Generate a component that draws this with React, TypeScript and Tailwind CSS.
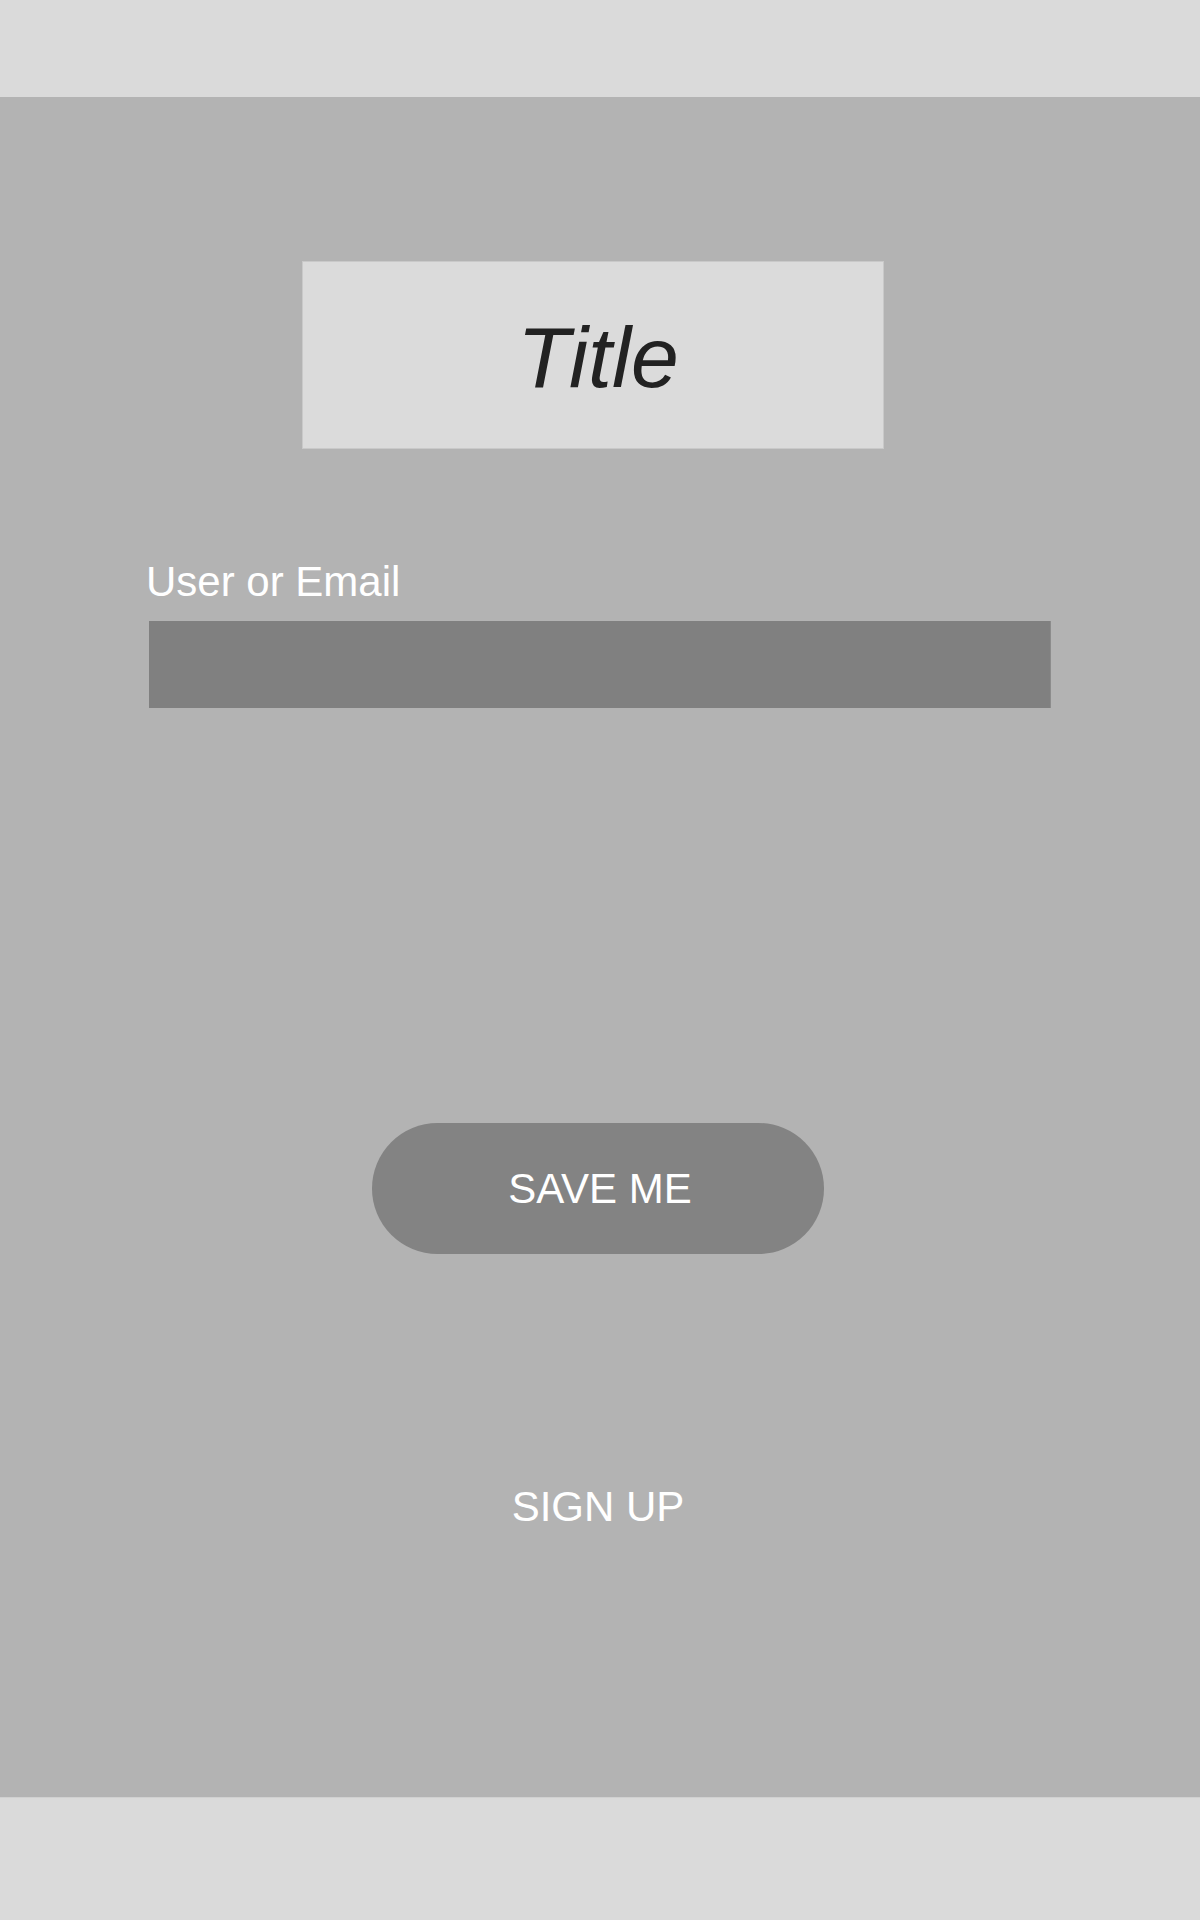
export default function App() {
  return (
    <div className="w-[1200px] h-[1920px] flex flex-col bg-[#b3b3b3]" style={{ fontFamily: '"Liberation Sans", Arial, sans-serif' }}>
      <header className="h-[97px] shrink-0 bg-[#dadada]" />
      <main className="flex-1 flex flex-col bg-[#b3b3b3]">
        <div className="mt-[164px] ml-[302px] w-[582px] h-[188px] bg-[#dbdbdb] border border-[#c9c9c9] flex items-center justify-center">
          <span className="italic text-[86px] leading-none text-[#222222] pl-[10px] pt-[4px]">Title</span>
        </div>
        <label className="mt-[109px] ml-[146px] text-[42px] leading-[48px] text-white">User or Email</label>
        <div className="mt-[15px] ml-[149px] w-[902px] h-[87px] bg-[#808080] border-r border-[#8c8c8c]" />
        <button className="mt-[415px] ml-[372px] w-[452px] h-[131px] rounded-full bg-[#838383] flex items-center justify-center text-white text-[42px] leading-none pl-[4px]">
          SAVE ME
        </button>
        <div className="mt-[229px] ml-[372px] w-[452px] text-center text-[42px] leading-[48px] text-white">SIGN UP</div>
      </main>
      <footer className="h-[123px] shrink-0 bg-[#dadada] border-t border-[#d0d0d0]" />
    </div>
  );
}
